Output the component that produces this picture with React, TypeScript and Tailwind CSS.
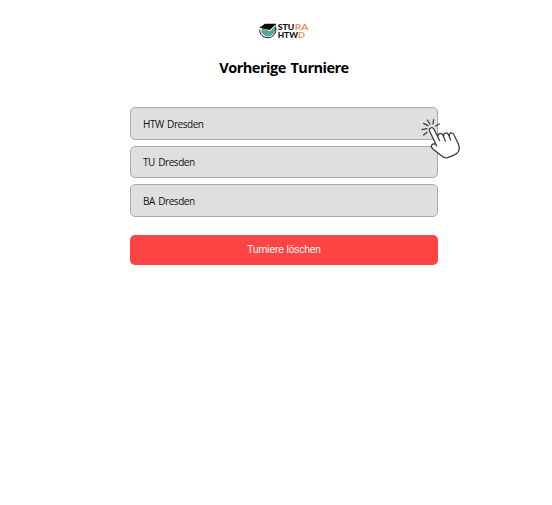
const tournaments = ["HTW Dresden", "TU Dresden", "BA Dresden"];

function Logo() {
  return (
    <svg className="h-[30px] w-[70px]" viewBox="0 0 210 90" fontFamily="Lato, 'Liberation Sans', sans-serif" fontSize="25">
      <path d="M36 39 L60 49 L74 34 A21 21 0 1 1 34 51 Z" fill="#55a49e" />
      <path d="M29 44 C29 58 39 68 53 68 C70 68 80 54 77 37" fill="none" stroke="#171717" strokeWidth="3" />
      <path d="M28 38 L45 26 L79 26 L59 45 Z" fill="#080808" />
      <path d="M77 27 V45" stroke="#171717" strokeWidth="2" />
      <text x="83" y="45" fontWeight="900" textLength="50" lengthAdjust="spacingAndGlyphs" fill="#111">STU</text>
      <text x="134" y="45" fontWeight="500" textLength="41" lengthAdjust="spacingAndGlyphs" fill="#f07f3c">RA</text>
      <text x="83" y="68" fontWeight="900" textLength="61" lengthAdjust="spacingAndGlyphs" fill="#111">HTW</text>
      <text x="144" y="68" fontWeight="500" textLength="21" lengthAdjust="spacingAndGlyphs" fill="#f07f3c">D</text>
    </svg>
  );
}

function ClickHand() {
  return (
    <svg
      className="pointer-events-none absolute top-[2px] -right-[33px] z-10 h-[55px] w-[60px]"
      viewBox="0 0 180 165"
      fill="none"
      stroke="#3c3c3c"
      strokeWidth="3.8"
      strokeLinecap="round"
      strokeLinejoin="round"
    >
      <path
        d="M82 105 L60 63 C56 54 67 49 72 57 L89 91 L84 80 C82 70 94 66 99 75 L104 86 L101 78 C99 68 111 65 116 74 L121 83 L118 76 C118 66 128 66 132 74 L145 101 C152 119 145 130 130 136 L113 143 C104 146 99 142 92 136 L68 116 C59 108 67 98 75 102 Z"
        fill="#fff"
        stroke="none"
      />
      <path d="M80 108 L59 64 C55 54 67 49 72 58 L89 92 M84 82 C81 70 94 66 99 76 L106 93 M101 79 C99 68 111 65 116 75 L122 90 M118 77 C118 66 128 66 132 75 L145 101 C152 119 145 130 130 136 L113 143 C104 146 99 142 92 136 L68 116 C59 108 67 98 78 103" />
      <path d="M41 40 L54 47 M52 30 L60 42 M71 29 L69 42 M88 42 L77 48 M36 59 L51 56 M51 67 L41 75" />
    </svg>
  );
}

export default function App() {
  return (
    <main className="flex min-h-screen flex-col items-center bg-white pt-[15px] font-['Open_Sans','Noto_Sans',sans-serif] text-black">
      <div className="ml-[18px] flex h-[30px] justify-center">
        <Logo />
      </div>
      <h1 className="mt-[10.5px] mb-[-0.5px] ml-4 flex h-6 items-center text-[14.5px] leading-6 font-bold tracking-[-0.5px] whitespace-nowrap [word-spacing:1.5px]">
        Vorherige Turniere
      </h1>
      <div className="mt-7 ml-4 flex w-[308px] flex-col">
        <ul className="flex flex-col gap-[6px]">
          {tournaments.map((name, i) => (
            <li
              key={name}
              className="relative flex h-[32.6px] items-center rounded-[5px] border border-[#aaa] bg-[#dfdfdf] pl-3 text-[10px] leading-4 tracking-[-0.45px] text-[#111] [word-spacing:1.2px]"
            >
              <span className="pt-px">{name}</span>
              {i === 0 && <ClickHand />}
            </li>
          ))}
        </ul>
        <button className="mt-[18.5px] h-[29.5px] rounded-[5px] bg-[#ff4444] text-center font-['Liberation_Sans',Arial,sans-serif] text-[10.2px] tracking-[-0.12px] text-white">
          Turniere löschen
        </button>
      </div>
    </main>
  );
}
